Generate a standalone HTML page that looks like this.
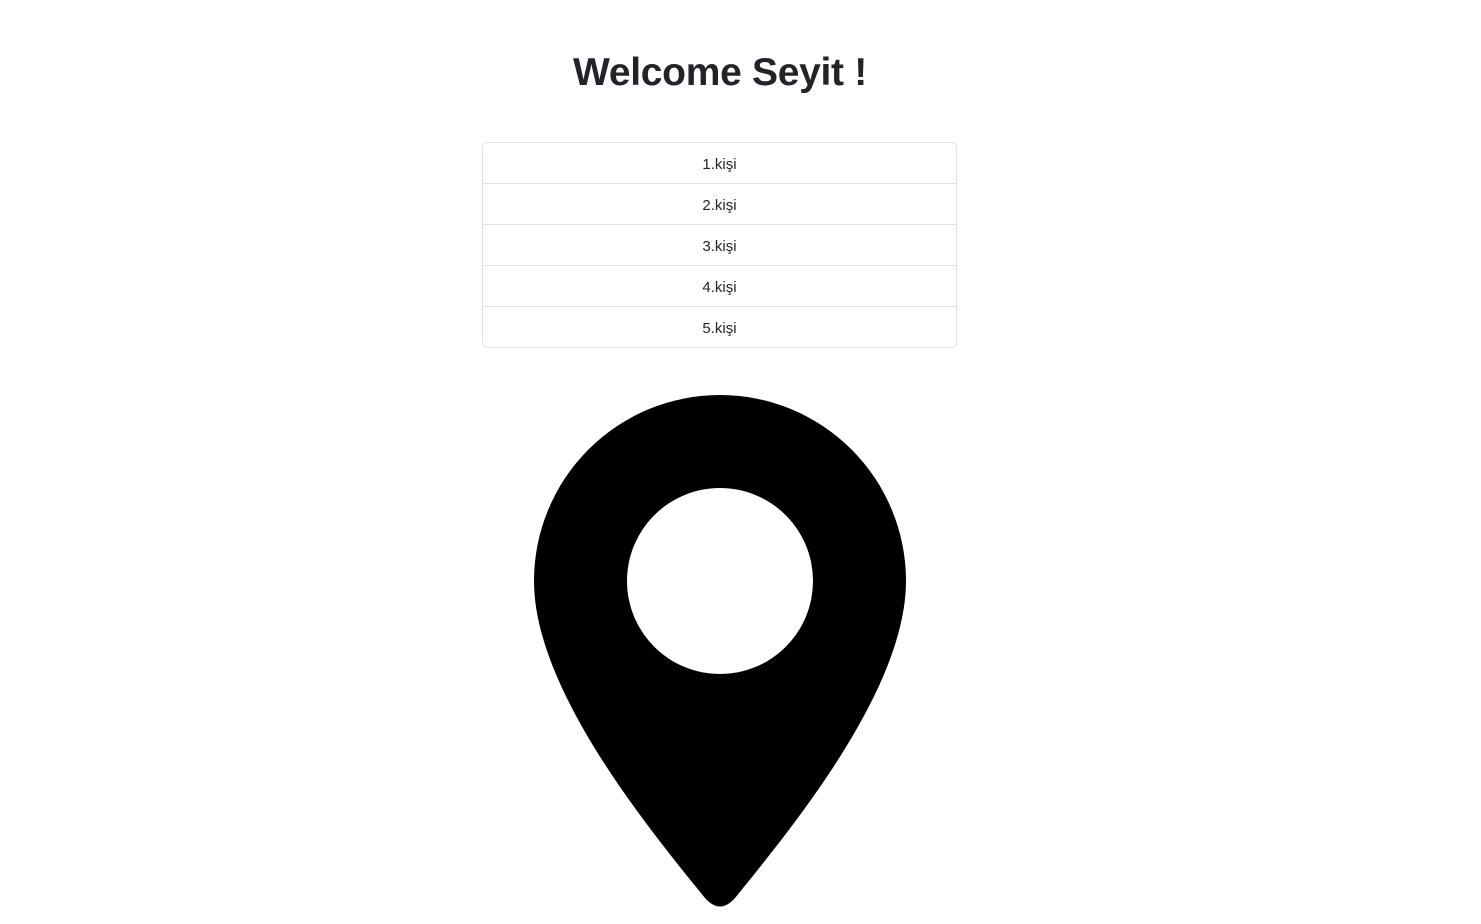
<!DOCTYPE html>
<html><head><meta charset="utf-8"><style>
body{margin:0;background:#fff;font-family:"Liberation Sans",sans-serif;color:#212529;}
h1{position:absolute;top:49px;left:0;width:1440px;text-align:center;margin:0;font-size:39px;font-weight:bold;line-height:48px;letter-spacing:-0.3px;}
.lg{position:absolute;left:482px;top:142px;width:473px;border:1px solid #dee2e6;border-radius:5px;}
.lg div{height:40px;line-height:43px;text-align:center;font-size:15px;border-top:1px solid #dee2e6;}
.lg div:first-child{border-top:none}
svg{position:absolute;left:0;top:0}
</style></head><body>
<h1>Welcome Seyit !</h1>
<div class="lg"><div>1.kişi</div><div>2.kişi</div><div>3.kişi</div><div>4.kişi</div><div>5.kişi</div></div>
<svg width="1481" height="924"><path fill="#000" fill-rule="evenodd" d="M534 581A186 186 0 0 1 906 581C906 690 790 830 735 898Q720 915 705 898C650 830 534 690 534 581ZM627 581A93 93 0 1 0 813 581A93 93 0 1 0 627 581Z"/></svg>
</body></html>
